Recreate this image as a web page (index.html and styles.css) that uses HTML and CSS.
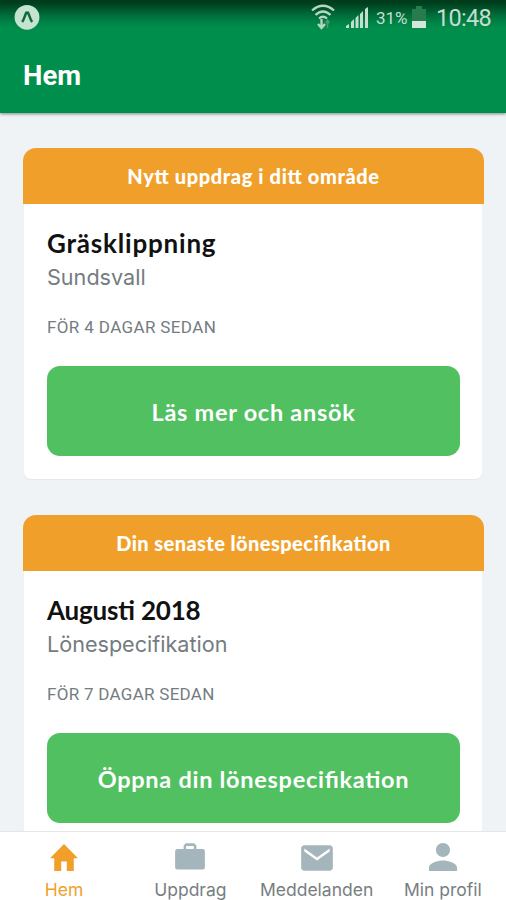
FILE: index.html
```html
<!DOCTYPE html>
<html lang="sv">
<head>
<meta charset="utf-8">
<title>Hem</title>
<link rel="stylesheet" href="styles.css">
</head>
<body>
<div class="app">
  <header class="header">
    <div class="status">
      <svg class="badge" width="26" height="26" viewBox="0 0 26 26"><circle cx="13" cy="13.300" r="12.400" fill="#c4e3d1"/><path d="M8.200 18C10 15.500 11 11 12.200 8.800h1.900C15.300 11 16.300 15.500 18.100 18" fill="none" stroke="#12673b" stroke-width="2.500"/></svg>
      <div class="indicators">
        <svg class="wifi" width="24" height="28" viewBox="0 0 24 28" fill="none" stroke="#b9d6c5" stroke-width="2.300"><path d="M1 6.500Q12-3 23 6.500M4.500 11Q12 4 19.500 11M8 14.500Q12 11 16 14.500"/><path d="M10.500 15v8M7 20l3.500 4 3.500-4"/><path d="M16.500 24v-7M14.500 19l2-3 2 3" stroke="#4d9a70" stroke-width="1.500"/></svg>
        <svg class="signal" width="24" height="23" viewBox="0 0 24 23" fill="#c4decf"><path d="M1 22v-2l3-2v4zM6 22v-6l3-3v9zM10.500 22V12l3-3v13zM15 22V8l3-3v17zM20 22V3l3-2v21z"/></svg>
        <span class="percent">31%</span>
        <svg class="battery" width="14" height="23" viewBox="0 0 14 23"><path d="M4 0h6v3h4v13H0V3h4z" fill="#287b4d"/><path d="M0 15h14v7H0z" fill="#d0e7da"/></svg>
        <span class="clock">10:48</span>
      </div>
    </div>
    <h1 class="title">Hem</h1>
  </header>
  <main class="feed">
    <section class="card">
      <div class="band"><span class="band-new">Nytt uppdrag i ditt område</span></div>
      <div class="body">
        <h2 class="name name-job">Gräsklippning</h2>
        <p class="detail">Sundsvall</p>
        <p class="time">FÖR 4 DAGAR SEDAN</p>
        <button class="action">Läs mer och ansök</button>
      </div>
    </section>
    <section class="card">
      <div class="band"><span class="band-pay">Din senaste lönespecifikation</span></div>
      <div class="body">
        <h2 class="name">Augusti 2018</h2>
        <p class="detail">Lönespecifikation</p>
        <p class="time time-pay">FÖR 7 DAGAR SEDAN</p>
        <button class="action">Öppna din lönespecifikation</button>
      </div>
    </section>
  </main>
  <nav class="tabs">
    <a class="tab active"><svg width="34" height="35" viewBox="2 3 20 17" preserveAspectRatio="none" class="home"><path d="M10 20v-6h4v6h5v-8h3L12 3 2 12h3v8z"/></svg><span>Hem</span></a>
    <a class="tab"><svg width="34" height="35" viewBox="0 0 24 24"><path d="M21 6h-4.500V3.500L15 2H9L7.500 3.500V6H3Q1.500 6 1.500 7.500v11.500Q1.500 20.500 3 20.500h18q1.500 0 1.500-1.500V7.500Q22.500 6 21 6zM14.700 6H9.300V3.800h5.400z"/></svg><span>Uppdrag</span></a>
    <a class="tab"><svg class="mail" width="38" height="36" viewBox="0 0 24 24" preserveAspectRatio="none"><path d="M20 3.500H4c-1.100 0-2 .9-2 2v13c0 1.100.9 2 2 2h16c1.100 0 2-.9 2-2v-13c0-1.100-.9-2-2-2zm0 4.200l-8 6-8-6v-2l8 6 8-6z"/></svg><span>Meddelanden</span></a>
    <a class="tab"><svg width="42" height="42" viewBox="0 0 24 24"><path d="M12 12c2.210 0 4-1.790 4-4s-1.790-4-4-4-4 1.790-4 4 1.790 4 4 4zm0 2c-2.670 0-8 1.340-8 4v2h16v-2c0-2.660-5.330-4-8-4z"/></svg><span>Min profil</span></a>
  </nav>
</div>
</body>
</html>
```
FILE: styles.css
```css
* { box-sizing: border-box; }
body { margin: 0; font-family: Lato, sans-serif; }
h1, h2, p { margin: 0; }
.app {
  width: 506px;
  height: 900px;
  display: flex;
  flex-direction: column;
  overflow: hidden;
  background: #eff3f6;
}
.header {
  height: 113px;
  flex: none;
  background: linear-gradient(#003b1c 0, #00411f 4px, #006535 13px, #008246 22px, #008e4c 29px);
  box-shadow: 0 1px 3px #7b8a84;
  z-index: 1;
}
.status {
  height: 37px;
  display: flex;
  justify-content: space-between;
  padding: 4px 15px 0 14px;
  font-family: Roboto, sans-serif;
  color: #c4decf;
}
.indicators { display: flex; align-items: flex-start; }
.wifi { margin-right: 10px; }
.signal { margin: 2px 7px 0 0; }
.percent { width: 31px; font-size: 17px; line-height: 28px; white-space: nowrap; margin-right: 5px; }
.battery { margin: 2px 10px 0 0; }
.clock { width: 55px; font-size: 23.500px; line-height: 29px; letter-spacing: -.7px; white-space: nowrap; }
.title {
  padding: 0 23px;
  font: 700 27.500px/77px Roboto, sans-serif;
  color: #fff;
}
.feed { flex: 1; min-height: 0; overflow: hidden; padding: 35px 22px 0 23px; }
.card { height: 331px; margin-bottom: 36px; }
.band {
  height: 55.500px;
  display: flex;
  justify-content: center;
  border-radius: 13px 13px 0 0;
  background: #f19f2b;
  color: #fff;
  font-size: 20px;
  line-height: 57px;
  font-weight: 900;
  white-space: nowrap;
  font-feature-settings: "liga" 1;
}
.band-new { letter-spacing: .63px; }
.band-pay { letter-spacing: .43px; }
.body {
  height: 275px;
  margin: 0 2px 0 1px;
  padding: 21px 22px 0 23px;
  background: #fff;
  border-radius: 0 0 7px 7px;
  box-shadow: 0 1px 1px #e4e8eb;
}
.name { font-size: 26px; line-height: 36px; font-weight: 700; color: #111; white-space: nowrap; letter-spacing: -.2px; font-feature-settings: "liga" 1; }
.name-job { letter-spacing: .8px; }
.detail { font: 400 21.600px/32px Inter, sans-serif; color: #747c80; }
.time { margin-top: 19px; font: 400 17px/30px Roboto, sans-serif; letter-spacing: .37px; color: #747c80; white-space: nowrap; }
.time-pay { letter-spacing: .28px; }
.action {
  display: block;
  width: 413px;
  height: 90px;
  margin-top: 24.500px;
  padding: 1px 0 0;
  border: 0;
  border-radius: 13px;
  background: #51c061;
  color: #fff;
  font: 700 23.500px Lato, sans-serif;
  letter-spacing: .72px;
  font-feature-settings: "liga" 1;
}
.tabs {
  height: 69px;
  flex: none;
  display: grid;
  grid-template-columns: repeat(4, 1fr);
  padding-left: 1px;
  background: #fff;
  border-top: 1px solid #e4e6e8;
  z-index: 1;
}
.tab {
  display: flex;
  flex-direction: column;
  align-items: center;
  justify-content: space-between;
  height: 68px;
  padding-top: 8px;
  font: 400 17.500px/20px Inter, sans-serif;
  color: #777e82;
  fill: #a5b5bc;
}
.tab span { height: 20px; white-space: nowrap; }
.tab:last-child { padding-top: 4px; }
.home { width: 28px; height: 27px; margin-top: 4px; }
.active { color: #f19f2b; fill: #f19f2b; }
```
